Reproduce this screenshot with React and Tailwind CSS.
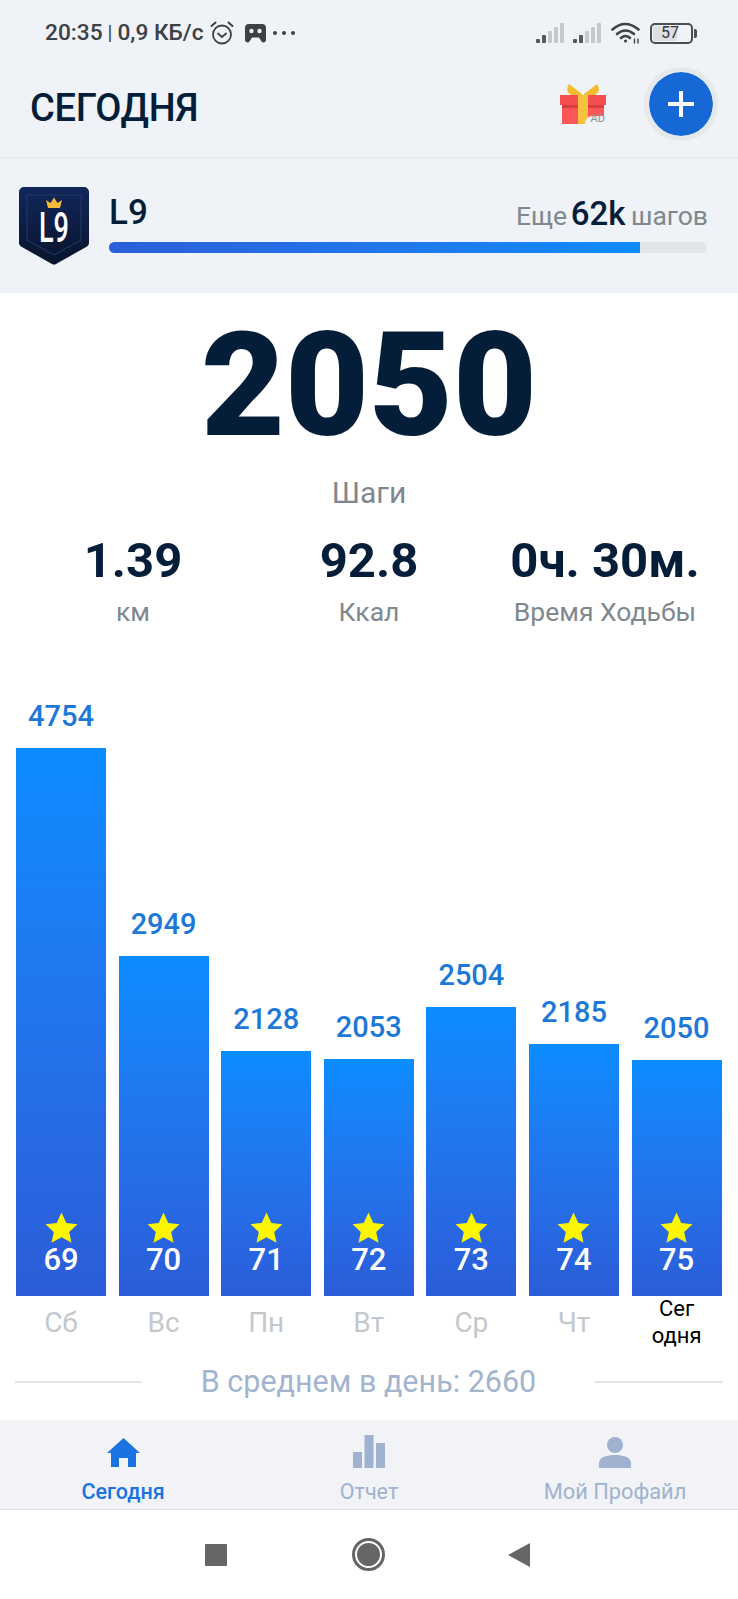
import React from "react";

const bars = [
  { v: 4754, d: "Сб", n: 69 },
  { v: 2949, d: "Вс", n: 70 },
  { v: 2128, d: "Пн", n: 71 },
  { v: 2053, d: "Вт", n: 72 },
  { v: 2504, d: "Ср", n: 73 },
  { v: 2185, d: "Чт", n: 74 },
  { v: 2050, d: "Сегодня", n: 75 },
];

function Signal() {
  return (
    <svg width="29" height="21" viewBox="0 0 29 21">
      <rect x="0" y="16" width="4" height="4" rx="1" fill="#55585c" />
      <rect x="6" y="12" width="4" height="8" rx="1" fill="#55585c" />
      <rect x="12" y="8" width="4" height="12" rx="1" fill="#c6c8cb" />
      <rect x="18" y="4" width="4" height="16" rx="1" fill="#c6c8cb" />
      <rect x="24" y="0" width="4" height="20" rx="1" fill="#c6c8cb" />
    </svg>
  );
}

function Star() {
  return (
    <svg width="33" height="31" viewBox="0 0 33 31">
      <path d="M16.5 0.5 L21.3 11 L32.5 12.2 L24.2 19.9 L26.5 30.8 L16.5 25.3 L6.5 30.8 L8.8 19.9 L0.5 12.2 L11.7 11 Z" fill="#fdf600" />
    </svg>
  );
}

function Badge() {
  return (
    <svg width="70" height="78" viewBox="0 0 70 78">
      <defs>
        <linearGradient id="bd" x1="0" y1="0" x2="0" y2="1">
          <stop offset="0" stopColor="#12275a" />
          <stop offset="1" stopColor="#08142c" />
        </linearGradient>
      </defs>
      <path d="M5 0 H65 a5 5 0 0 1 5 5 V56 a4 4 0 0 1 -2 3.5 L37 77 a4 4 0 0 1 -4 0 L2 59.5 a4 4 0 0 1 -2 -3.5 V5 a5 5 0 0 1 5 -5 Z" fill="url(#bd)" />
      <path d="M8 8 H62 V53 L35 68 L8 53 Z" fill="none" stroke="#24386a" strokeWidth="1" />
      <path d="M29 21 L27 13 L31.5 16 L35 10.5 L38.5 16 L43 13 L41 21 Z" fill="#f3b93a" />
      <text x="35" y="55" textAnchor="middle" fontFamily="Roboto" fontWeight="500" fontSize="43" fill="#fff" textLength="30" lengthAdjust="spacingAndGlyphs">L9</text>
    </svg>
  );
}

function Gift() {
  return (
    <div className="relative w-[46px] h-[42px]">
      <svg width="46" height="42" viewBox="0 0 46 42">
        <path d="M9 1 L22 11 L22 13 L12 13 Q4 8 9 1 Z" fill="#f5bb30" />
        <path d="M37 1 L24 11 L24 13 L34 13 Q42 8 37 1 Z" fill="#f5bb30" />
        <rect x="0" y="12" width="46" height="10" fill="#f44f4f" />
        <rect x="2" y="22" width="42" height="19" fill="#fb5757" />
        <rect x="2" y="22" width="42" height="3" fill="#d93f3f" />
        <rect x="18" y="12" width="10" height="29" fill="#f7c23b" />
        <path d="M25 41 Q25 33 33 33 H44 V41 Z" fill="#eef1f5" />
      </svg>
      <span className="absolute right-[1px] bottom-[1px] text-[11px] leading-[11px] text-[#8b9198]">AD</span>
    </div>
  );
}

function Wifi() {
  return (
    <svg width="30" height="22" viewBox="0 0 30 22" fill="none" stroke="#3f4247" strokeWidth="2.6" strokeLinecap="round">
      <path d="M1.5 7.5 Q14 -3.5 27.5 7.5" />
      <path d="M6 12 Q14.5 5 23 12" />
      <path d="M10 16 Q14.5 12 19 16" />
      <circle cx="14.5" cy="19" r="1.6" fill="#3f4247" stroke="none" />
      <path d="M23.5 17 V21 M27 17 V21" strokeWidth="1.4" />
    </svg>
  );
}

export default function App() {
  return (
    <div className="w-[738px] h-[1599px] flex flex-col bg-white font-[Roboto,sans-serif] text-[#041e3a] overflow-hidden">
      <header className="h-[293px] flex flex-col bg-[#eff2f6]">
        <div className="h-[64px] pt-[2px] flex items-center justify-between pl-[45px] pr-[41px]">
          <div className="flex items-center text-[#3d4045] font-medium text-[22.7px] leading-none">
            <span>20:35</span>
            <span className="mx-[5px] font-normal text-[20px]">|</span>
            <span>0,9 КБ/с</span>
            <svg className="ml-[6px] mr-[11px]" width="24" height="24" viewBox="0 0 24 24" fill="none" stroke="#3d4045" strokeWidth="1.8" strokeLinecap="round">
              <circle cx="12" cy="13.5" r="9" />
              <path d="M8 12.5 L12 16 L16 12.5" />
              <path d="M1.5 5 L5.5 1.5 M22.5 5 L18.5 1.5" strokeWidth="2" />
            </svg>
            <svg width="21" height="19" viewBox="0 0 21 19">
              <path d="M4 0 H17 a4 4 0 0 1 4 4 V16 a2.5 2.5 0 0 1 -4.5 1.5 L14 13.5 H7 L4.5 17.5 A2.5 2.5 0 0 1 0 16 V4 a4 4 0 0 1 4 -4 Z" fill="#3d4045" />
              <circle cx="6.5" cy="7" r="2.2" fill="#eff2f6" />
              <circle cx="14.5" cy="7" r="2.2" fill="#eff2f6" />
            </svg>
            <div className="flex gap-[5px] ml-[7px]">
              <span className="w-[4px] h-[4px] rounded-full bg-[#3d4045]" />
              <span className="w-[4px] h-[4px] rounded-full bg-[#3d4045]" />
              <span className="w-[4px] h-[4px] rounded-full bg-[#3d4045]" />
            </div>
          </div>
          <div className="flex items-center">
            <Signal />
            <div className="ml-[8px]"><Signal /></div>
            <div className="ml-[9px]"><Wifi /></div>
            <div className="ml-[9px] flex items-center">
              <div className="w-[43px] h-[21px] rounded-[5px] border-2 border-[#4a4d52] flex items-center p-[1px] relative">
                <div className="absolute left-[1px] top-[1px] bottom-[1px] w-[24px] rounded-[2px] bg-[#dcdee2]" />
                <span className="relative w-full text-center text-[16px] leading-none text-[#33363a] pr-[3px]">57</span>
              </div>
              <div className="w-[3px] h-[9px] ml-[1px] rounded-r-[2px] bg-[#4a4d52]" />
            </div>
          </div>
        </div>
        <div className="h-[95px] flex items-center justify-between pl-[30px] pr-[20px] border-b-2 border-[#e8eaee]">
          <h1 className="text-[38px] font-medium leading-none mt-[-6px] tracking-[-0.3px]">СЕГОДНЯ</h1>
          <div className="flex items-center gap-[38px] mb-[14px]">
            <Gift />
            <div className="w-[74px] h-[74px] rounded-full bg-[#1668d6] border-[5px] border-[#e6e8ec] flex items-center justify-center bg-clip-padding">
              <svg width="28" height="28" viewBox="0 0 28 28" stroke="#fff" strokeWidth="4">
                <path d="M14 1 V27 M1 14 H27" />
              </svg>
            </div>
          </div>
        </div>
        <div className="flex-1 flex items-start pl-[19px] pr-[31px] pt-[28px]">
          <Badge />
          <div className="flex-1 ml-[20px]">
            <div className="flex items-end justify-between h-[40px]">
              <span className="text-[35px] font-medium leading-[38px] mb-[-5px]">L9</span>
              <span className="text-[26.5px] leading-[36px] text-[#80888f] mb-[-7px] mr-[-1px]">
                Еще <span className="text-[33px] font-medium text-[#041e3a] ml-[-3px] mr-[-1px]">62k</span> шагов
              </span>
            </div>
            <div className="h-[11px] mt-[15px] rounded-full bg-[#e3e5e8] overflow-hidden">
              <div className="h-full w-[531px] bg-linear-to-r from-[#2a5fd8] to-[#0a8cff]" />
            </div>
          </div>
        </div>
      </header>

      <main className="flex-1 flex flex-col">
        <div className="text-center text-[145px] font-black leading-[172px] mt-[6px]">2050</div>
        <div className="text-center text-[30px] leading-[34px] text-[#80888f] mt-[5px]">Шаги</div>
        <div className="grid grid-cols-3 px-[15px] mt-[23px]">
          {[
            ["1.39", "км"],
            ["92.8", "Ккал"],
            ["0ч. 30м.", "Время Ходьбы"],
          ].map(([a, b]) => (
            <div key={b} className="text-center">
              <div className="text-[49px] font-bold leading-[56px]">{a}</div>
              <div className="text-[26.5px] leading-[32px] text-[#80888f] mt-[7px]">{b}</div>
            </div>
          ))}
        </div>
        <div className="flex items-start px-[16px] gap-[12.6px] mt-[8px]">
          {bars.map((b) => (
            <div key={b.n} className="w-[90px] flex flex-col">
              <div className="h-[660px] flex flex-col justify-end items-center">
                <div className="text-[29px] font-medium leading-[34px] mb-[15px] text-[#1e78d8]">{b.v}</div>
                <div
                  className="w-full bg-linear-to-b from-[#0a8cff] to-[#2b5cd9] flex flex-col items-center justify-end pb-[18px]"
                  style={{ height: Math.round(b.v * 0.1153) }}
                >
                  <Star />
                  <div className="text-[31px] font-medium leading-[36px] text-white mt-[-1px]">{b.n}</div>
                </div>
              </div>
              {b.n === 75 ? (
                <div className="text-center text-[22px] leading-[27px] text-black mt-[-1px]">
                  Сег<br />одня
                </div>
              ) : (
                <div className="text-center text-[28px] leading-[34px] text-[#c4c8cc] mt-[10px]">{b.d}</div>
              )}
            </div>
          ))}
        </div>
        <div className="mt-auto mb-[21px] flex items-center justify-between px-[15px] h-[34px]">
          <div className="w-[127px] h-[2px] bg-[#e2e4e7]" />
          <div className="text-[30.5px] leading-[34px] text-[#a3b4cf]">В среднем в день: 2660</div>
          <div className="w-[128px] h-[2px] bg-[#e2e4e7]" />
        </div>
      </main>

      <nav className="h-[90px] grid grid-cols-3 bg-[#f1f3f6] border-b border-[#dfe1e4]">
        <div className="flex flex-col items-center text-[#1a73e0] pt-[18px]">
          <svg width="33" height="29" viewBox="0 0 33 29" fill="currentColor">
            <path d="M16.5 0 L33 15 L29 15 L29 29 L21 29 L21 20 L12 20 L12 29 L4 29 L4 15 L0 15 Z" />
          </svg>
          <span className="text-[21.5px] font-medium leading-[24px] mt-[13px]">Сегодня</span>
        </div>
        <div className="flex flex-col items-center text-[#a0b2cf] pt-[15px]">
          <svg width="32" height="33" viewBox="0 0 32 33" fill="currentColor">
            <rect x="0" y="17" width="9" height="16" />
            <rect x="11.5" y="0" width="9" height="33" />
            <rect x="23" y="8" width="9" height="25" />
          </svg>
          <span className="text-[21.5px] leading-[24px] mt-[12px]">Отчет</span>
        </div>
        <div className="flex flex-col items-center text-[#a0b2cf] pt-[17px]">
          <svg width="32" height="31" viewBox="0 0 32 31" fill="currentColor">
            <circle cx="16" cy="8" r="8" />
            <path d="M0 31 V26 C0 20 8 18 16 18 C24 18 32 20 32 26 V31 Z" />
          </svg>
          <span className="text-[21.8px] leading-[24px] mt-[12px]">Мой Профайл</span>
        </div>
      </nav>

      <div className="h-[89px] bg-white flex items-center justify-center pr-[4px]">
        <div className="w-[22px] h-[22px] rounded-[1px] bg-[#666]" />
        <div className="w-[33px] h-[33px] rounded-full border-[3px] border-[#666] flex items-center justify-center ml-[125px]">
          <div className="w-[23px] h-[23px] rounded-full bg-[#666]" />
        </div>
        <svg className="ml-[123px]" width="22" height="24" viewBox="0 0 22 24">
          <path d="M22 0 V24 L0 12 Z" fill="#666" />
        </svg>
      </div>
    </div>
  );
}
